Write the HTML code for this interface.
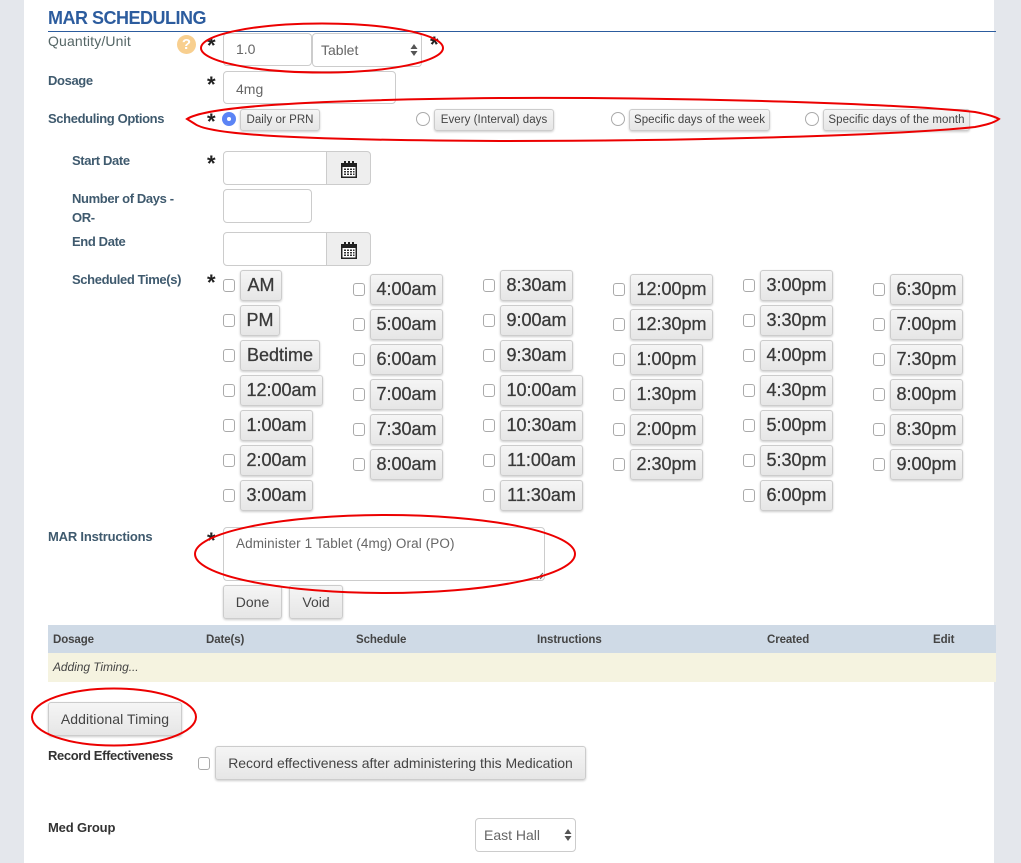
<!DOCTYPE html>
<html><head><meta charset="utf-8"><title>MAR Scheduling</title>
<style>
html,body{margin:0;padding:0;width:1021px;height:863px;overflow:hidden;background:#e4e7ec;font-family:"Liberation Sans",sans-serif}
#p{position:absolute;left:24px;top:0;width:970px;height:863px;background:#fff}
.a,.b,.c,.i,.l,.s,.r{position:absolute;box-sizing:border-box;white-space:nowrap}
.l{font-size:13px;font-weight:bold;color:#3f5a6e;letter-spacing:-.37px;line-height:16px}
.s{font-size:22px;font-weight:bold;color:#222;line-height:20px;left:207px;margin-top:2px}
.i{border:1px solid #ccc;border-radius:4px;background:#fff;color:#666;font-size:14px;line-height:31px;padding-left:12px}
.b{border:1px solid #ccc;border-radius:3px;background:linear-gradient(#f5f5f5,#e6e6e6);box-shadow:0 1px 2px rgba(0,0,0,.2);color:#444;text-align:center}
.t{height:31px;font-size:18px;line-height:29px;color:#3a3a3a;letter-spacing:0;-webkit-text-stroke:.3px #3a3a3a}
.o{height:22px;top:109px;font-size:11.5px;line-height:20px;letter-spacing:.05px}
.m{height:34px;font-size:14px;line-height:32px}
.c{width:12px;height:13px;border:1px solid #aaa;border-radius:3px;background:#fff}
.r{width:14px;height:14px;border-radius:50%;border:1px solid #aaa;background:#fff;top:112px}
.h{position:absolute;font-size:11.5px;font-weight:bold;color:#444;top:633px;line-height:14px;letter-spacing:-.1px}
.k{position:absolute;width:45px;height:34px;left:326px;border:1px solid #ccc;border-radius:0 4px 4px 0;background:#eee;box-sizing:border-box}
.k svg{position:absolute;left:14px;top:8px}
</style></head><body>
<div id="p"></div>

<div class="a" style="left:48px;top:8px;font-size:18px;font-weight:bold;color:#2c5c9e;line-height:21px;letter-spacing:-.5px">MAR SCHEDULING</div>
<div class="a" style="left:48px;top:31px;width:948px;height:1px;background:#2c5c9e"></div>

<div class="l" style="left:48px;top:33px;font-size:14px;font-weight:normal;letter-spacing:.15px;color:#566">Quantity/Unit</div>
<div class="a" style="left:177px;top:35px;width:19px;height:19px;border-radius:50%;background:#f8cf8f;color:#fff;font-size:15px;font-weight:bold;text-align:center;line-height:19px">?</div>
<div class="s" style="top:34px">*</div>
<div class="i" style="left:223px;top:33px;width:89px;height:33px">1.0</div>
<div class="i" style="left:312px;top:33px;width:110px;height:34px;padding-left:8px;line-height:32px">Tablet</div>
<svg style="position:absolute;left:410px;top:43px" width="8" height="14"><path d="M4 1L7.500 6H.5zM4 13L.5 8h7z" fill="#555"/></svg>
<div class="s" style="left:430px;top:33px">*</div>

<div class="l" style="left:48px;top:73px">Dosage</div>
<div class="s" style="top:73px">*</div>
<div class="i" style="left:223px;top:71px;width:173px;height:33px;line-height:35px">4mg</div>

<div class="l" style="left:48px;top:111px">Scheduling Options</div>
<div class="s" style="top:110px">*</div>
<div class="r" style="left:222px;top:112px;border:0;background:#5b84f5"></div>
<div class="a" style="left:227px;top:117px;width:4px;height:4px;border-radius:50%;background:#fff"></div>
<div class="b o" style="left:240px;width:80px">Daily or PRN</div>
<div class="r" style="left:416px"></div>
<div class="b o" style="left:434px;width:120px">Every (Interval) days</div>
<div class="r" style="left:611px"></div>
<div class="b o" style="left:629px;width:141px">Specific days of the week</div>
<div class="r" style="left:805px"></div>
<div class="b o" style="left:823px;width:147px">Specific days of the month</div>

<div class="l" style="left:72px;top:153px">Start Date</div>
<div class="s" style="top:152px">*</div>
<div class="i" style="left:223px;top:151px;width:104px;height:34px;border-radius:4px 0 0 4px"></div>
<div class="k" style="top:151px"><svg width="16" height="18" viewBox="0 0 16 18"><path d="M0 3h16v15H0z" fill="#222"/><path d="M1.500 7h13v9.500h-13z" fill="#fff"/><path d="M3 1h2v4H3zM7 1h2v4H7zM11 1h2v4h-2z" fill="#222"/><path d="M3 8.500h2v1.500H3zM6 8.500h2v1.500H6zM9 8.500h2v1.500H9zM12 8.500h1.500v1.500H12zM3 11h2v1.500H3zM6 11h2v1.500H6zM9 11h2v1.500H9zM12 11h1.500v1.500H12zM3 13.500h2V15H3zM6 13.500h2V15H6zM9 13.500h2V15H9zM12 13.500h1.500V15H12z" fill="#333"/></svg></div>

<div class="l" style="left:72px;top:189px;line-height:19px">Number of Days -<br>OR-</div>
<div class="i" style="left:223px;top:189px;width:89px;height:34px"></div>

<div class="l" style="left:72px;top:234px">End Date</div>
<div class="i" style="left:223px;top:232px;width:104px;height:34px;border-radius:4px 0 0 4px"></div>
<div class="k" style="top:232px"><svg width="16" height="18" viewBox="0 0 16 18"><path d="M0 3h16v15H0z" fill="#222"/><path d="M1.500 7h13v9.500h-13z" fill="#fff"/><path d="M3 1h2v4H3zM7 1h2v4H7zM11 1h2v4h-2z" fill="#222"/><path d="M3 8.500h2v1.500H3zM6 8.500h2v1.500H6zM9 8.500h2v1.500H9zM12 8.500h1.500v1.500H12zM3 11h2v1.500H3zM6 11h2v1.500H6zM9 11h2v1.500H9zM12 11h1.500v1.500H12zM3 13.500h2V15H3zM6 13.500h2V15H6zM9 13.500h2V15H9zM12 13.500h1.500V15H12z" fill="#333"/></svg></div>

<div class="l" style="left:72px;top:272px">Scheduled Time(s)</div>
<div class="s" style="top:271px">*</div>

<!-- col 1 -->
<div class="c" style="left:223px;top:279px"></div><div class="b t" style="left:240px;top:270px;width:42px">AM</div>
<div class="c" style="left:223px;top:314px"></div><div class="b t" style="left:240px;top:305px;width:40px">PM</div>
<div class="c" style="left:223px;top:349px"></div><div class="b t" style="left:240px;top:340px;width:80px">Bedtime</div>
<div class="c" style="left:223px;top:384px"></div><div class="b t" style="left:240px;top:375px;width:83px">12:00am</div>
<div class="c" style="left:223px;top:419px"></div><div class="b t" style="left:240px;top:410px;width:73px">1:00am</div>
<div class="c" style="left:223px;top:454px"></div><div class="b t" style="left:240px;top:445px;width:73px">2:00am</div>
<div class="c" style="left:223px;top:489px"></div><div class="b t" style="left:240px;top:480px;width:73px">3:00am</div>
<!-- col 2 -->
<div class="c" style="left:353px;top:283px"></div><div class="b t" style="left:370px;top:274px;width:73px">4:00am</div>
<div class="c" style="left:353px;top:318px"></div><div class="b t" style="left:370px;top:309px;width:73px">5:00am</div>
<div class="c" style="left:353px;top:353px"></div><div class="b t" style="left:370px;top:344px;width:73px">6:00am</div>
<div class="c" style="left:353px;top:388px"></div><div class="b t" style="left:370px;top:379px;width:73px">7:00am</div>
<div class="c" style="left:353px;top:423px"></div><div class="b t" style="left:370px;top:414px;width:73px">7:30am</div>
<div class="c" style="left:353px;top:458px"></div><div class="b t" style="left:370px;top:449px;width:73px">8:00am</div>
<!-- col 3 -->
<div class="c" style="left:483px;top:279px"></div><div class="b t" style="left:500px;top:270px;width:73px">8:30am</div>
<div class="c" style="left:483px;top:314px"></div><div class="b t" style="left:500px;top:305px;width:73px">9:00am</div>
<div class="c" style="left:483px;top:349px"></div><div class="b t" style="left:500px;top:340px;width:73px">9:30am</div>
<div class="c" style="left:483px;top:384px"></div><div class="b t" style="left:500px;top:375px;width:83px">10:00am</div>
<div class="c" style="left:483px;top:419px"></div><div class="b t" style="left:500px;top:410px;width:83px">10:30am</div>
<div class="c" style="left:483px;top:454px"></div><div class="b t" style="left:500px;top:445px;width:83px">11:00am</div>
<div class="c" style="left:483px;top:489px"></div><div class="b t" style="left:500px;top:480px;width:83px">11:30am</div>
<!-- col 4 -->
<div class="c" style="left:613px;top:283px"></div><div class="b t" style="left:630px;top:274px;width:83px">12:00pm</div>
<div class="c" style="left:613px;top:318px"></div><div class="b t" style="left:630px;top:309px;width:83px">12:30pm</div>
<div class="c" style="left:613px;top:353px"></div><div class="b t" style="left:630px;top:344px;width:73px">1:00pm</div>
<div class="c" style="left:613px;top:388px"></div><div class="b t" style="left:630px;top:379px;width:73px">1:30pm</div>
<div class="c" style="left:613px;top:423px"></div><div class="b t" style="left:630px;top:414px;width:73px">2:00pm</div>
<div class="c" style="left:613px;top:458px"></div><div class="b t" style="left:630px;top:449px;width:73px">2:30pm</div>
<!-- col 5 -->
<div class="c" style="left:743px;top:279px"></div><div class="b t" style="left:760px;top:270px;width:73px">3:00pm</div>
<div class="c" style="left:743px;top:314px"></div><div class="b t" style="left:760px;top:305px;width:73px">3:30pm</div>
<div class="c" style="left:743px;top:349px"></div><div class="b t" style="left:760px;top:340px;width:73px">4:00pm</div>
<div class="c" style="left:743px;top:384px"></div><div class="b t" style="left:760px;top:375px;width:73px">4:30pm</div>
<div class="c" style="left:743px;top:419px"></div><div class="b t" style="left:760px;top:410px;width:73px">5:00pm</div>
<div class="c" style="left:743px;top:454px"></div><div class="b t" style="left:760px;top:445px;width:73px">5:30pm</div>
<div class="c" style="left:743px;top:489px"></div><div class="b t" style="left:760px;top:480px;width:73px">6:00pm</div>
<!-- col 6 -->
<div class="c" style="left:873px;top:283px"></div><div class="b t" style="left:890px;top:274px;width:73px">6:30pm</div>
<div class="c" style="left:873px;top:318px"></div><div class="b t" style="left:890px;top:309px;width:73px">7:00pm</div>
<div class="c" style="left:873px;top:353px"></div><div class="b t" style="left:890px;top:344px;width:73px">7:30pm</div>
<div class="c" style="left:873px;top:388px"></div><div class="b t" style="left:890px;top:379px;width:73px">8:00pm</div>
<div class="c" style="left:873px;top:423px"></div><div class="b t" style="left:890px;top:414px;width:73px">8:30pm</div>
<div class="c" style="left:873px;top:458px"></div><div class="b t" style="left:890px;top:449px;width:73px">9:00pm</div>

<div class="l" style="left:48px;top:529px;letter-spacing:-.2px">MAR Instructions</div>
<div class="s" style="top:529px">*</div>
<div class="i" style="left:223px;top:527px;width:322px;height:54px;font-size:13.500px;line-height:32px;letter-spacing:.1px">Administer 1 Tablet (4mg) Oral (PO)</div>
<svg style="position:absolute;left:536px;top:572px" width="8" height="8"><path d="M1 7L7 1M4 7L7 4" stroke="#666" stroke-width="1"/></svg>
<div class="b m" style="left:223px;top:585px;width:59px">Done</div>
<div class="b m" style="left:289px;top:585px;width:54px">Void</div>

<div class="a" style="left:48px;top:625px;width:948px;height:28px;background:#cfdae6"></div>
<div class="h" style="left:53px">Dosage</div>
<div class="h" style="left:206px">Date(s)</div>
<div class="h" style="left:356px">Schedule</div>
<div class="h" style="left:537px">Instructions</div>
<div class="h" style="left:767px">Created</div>
<div class="h" style="left:933px">Edit</div>
<div class="a" style="left:48px;top:653px;width:948px;height:29px;background:#f5f3e0"></div>
<div class="a" style="left:53px;top:660px;font-size:12px;font-style:italic;color:#444;line-height:15px;letter-spacing:-.07px">Adding Timing...</div>

<div class="b m" style="left:48px;top:702px;width:134px;letter-spacing:.1px">Additional Timing</div>
<div class="l" style="left:48px;top:748px;color:#333">Record Effectiveness</div>
<div class="c" style="left:198px;top:757px"></div>
<div class="b m" style="left:215px;top:746px;width:371px;letter-spacing:-.04px">Record effectiveness after administering this Medication</div>
<div class="l" style="left:48px;top:820px;color:#333;letter-spacing:-.15px">Med Group</div>
<div class="i" style="left:475px;top:818px;width:101px;height:34px;padding-left:8px;line-height:33px">East Hall</div>
<svg style="position:absolute;left:564px;top:828px" width="8" height="14"><path d="M4 1L7.500 6H.5zM4 13L.5 8h7z" fill="#555"/></svg>

<svg style="position:absolute;left:0;top:0;pointer-events:none" width="1021" height="863" fill="none" stroke="#ec0000" stroke-width="2">
<ellipse cx="322" cy="48" rx="121" ry="24.500"/>
<path d="M187 119C205 107 300 100 500 98C700 97 900 104 975 112C985 114 994 116 999 119C994 123 985 125 975 127C900 135 700 141 500 141C300 140 210 135 195 124Z"/>
<ellipse cx="385" cy="554" rx="190" ry="39"/>
<ellipse cx="114" cy="717" rx="82" ry="28.500"/>
</svg>
</body></html>
